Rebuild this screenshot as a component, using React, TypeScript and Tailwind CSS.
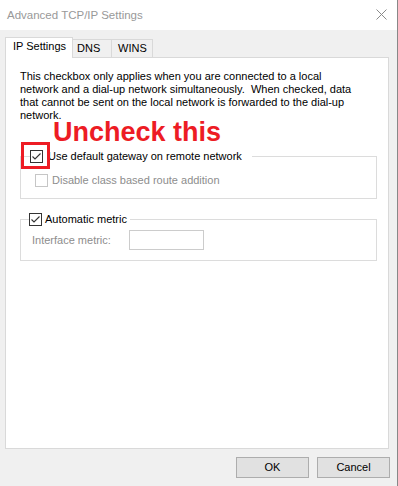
const CheckBox = ({ checked, disabled }: { checked?: boolean; disabled?: boolean }) => (
  <span
    className={
      "flex h-[13px] w-[13px] shrink-0 items-center justify-center border bg-white " +
      (disabled ? "border-[#c6c6c6]" : "border-[#333333]")
    }
  >
    {checked && (
      <svg width="11" height="11" viewBox="0 0 11 11">
        <polyline points="1.5,5.5 4,8 9.5,2.5" fill="none" stroke="#333333" strokeWidth="1.1" />
      </svg>
    )}
  </span>
);

const paragraph = `This checkbox only applies when you are connected to a local
network and a dial-up network simultaneously.  When checked, data
that cannot be sent on the local network is forwarded to the dial-up
network.`;

export default function App() {
  return (
    <div className="relative h-[486px] w-[398px] overflow-hidden border-r border-[#888888] bg-[#f0f0f0] font-['Liberation_Sans',Arial,sans-serif] text-[11px] leading-[13px] text-black">
      {/* title bar */}
      <div className="flex h-[30px] items-center justify-between bg-white pl-[7px] pr-[10px]">
        <span className="text-[11.5px] text-[#999999]">Advanced TCP/IP Settings</span>
        <svg width="11" height="11" viewBox="0 0 11 11" className="mt-[-1px]">
          <path d="M0.5 0.5 L10.5 10.5 M10.5 0.5 L0.5 10.5" stroke="#8a8a8a" strokeWidth="1" />
        </svg>
      </div>

      {/* tabs */}
      <div className="mt-[7px] flex h-[20px] items-end pl-[5px]">
        <div className="relative z-10 -mb-px h-[21px] w-[68px] border-x border-t border-[#d9d9d9] bg-white pl-[7px] pt-[2px]">
          IP Settings
        </div>
        <div className="h-[18px] w-[39px] border-r border-t border-[#d9d9d9] pl-[4px] pt-[2px]">DNS</div>
        <div className="h-[18px] w-[41px] border-r border-t border-[#d9d9d9] pl-[6px] pt-[2px]">WINS</div>
      </div>

      {/* tab page */}
      <div className="ml-[5px] h-[392px] w-[384px] border border-[#d9d9d9] bg-white pl-[14px] pt-[12px]">
        <p className="whitespace-pre">{paragraph}</p>

        <fieldset className="mt-[28px] w-[357px] border border-[#dcdcdc]">
          <legend className="ml-[9px] whitespace-nowrap pr-[10px]">
            <span className="flex items-center gap-[5px]">
              <CheckBox checked />
              <span>Use default gateway on remote network</span>
            </span>
          </legend>
          <div className="mt-[11px] flex items-center gap-[4px] pb-[11px] pl-[14px] text-[#8d8d8d]">
            <CheckBox disabled />
            <span>Disable class based route addition</span>
          </div>
        </fieldset>

        <fieldset className="mt-[14px] w-[357px] border border-[#dcdcdc]">
          <legend className="ml-[8px] whitespace-nowrap pr-[3px]">
            <span className="flex items-center gap-[3px]">
              <CheckBox checked />
              <span>Automatic metric</span>
            </span>
          </legend>
          <div className="mt-[4px] flex items-center pb-[10px] pl-[11px]">
            <span className="w-[97px] text-[#8d8d8d]">Interface metric:</span>
            <div className="h-[20px] w-[75px] border border-[#cccccc] bg-white" />
          </div>
        </fieldset>
      </div>

      {/* buttons */}
      <div className="mt-[8px] flex gap-[8px] pl-[236px]">
        <button className="h-[21px] w-[73px] border border-[#adadad] bg-[#e1e1e1] text-center">OK</button>
        <button className="h-[21px] w-[73px] border border-[#adadad] bg-[#e1e1e1] text-center">Cancel</button>
      </div>

      {/* annotation overlay */}
      <div className="absolute left-[53px] top-[122px] text-[27px] font-bold leading-[21px] text-[#ed1c24]">
        Uncheck this
      </div>
      <div className="absolute left-[21px] top-[142px] h-[27px] w-[29px] border-[3px] border-[#ed1c24]" />
    </div>
  );
}
